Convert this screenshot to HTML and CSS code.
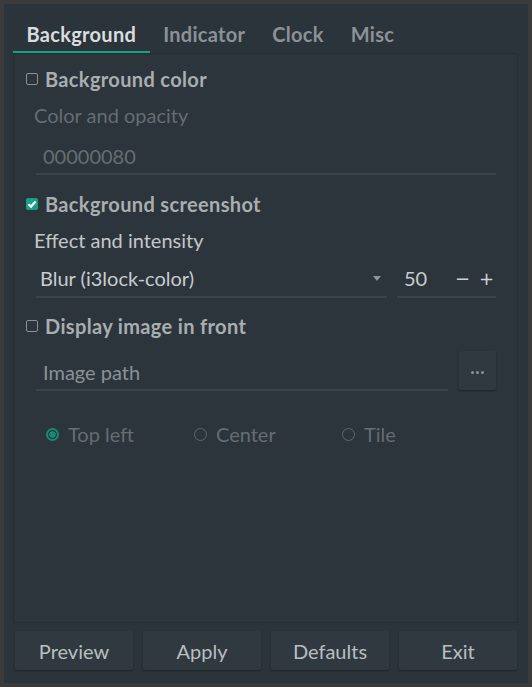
FILE: index.html
```html
<!DOCTYPE html>
<html>
<head>
<meta charset="utf-8">
<link rel="stylesheet" href="styles.css">
</head>
<body>
<div class="window">
  <div class="tabbar">
    <div class="tab active">Background</div>
    <div class="tab">Indicator</div>
    <div class="tab">Clock</div>
    <div class="tab">Misc</div>
  </div>
  <div class="panel">
    <div class="cbrow r1"><span class="cb"></span><span class="cblabel">Background color</span></div>
    <div class="label disabled r2">Color and opacity</div>
    <div class="field r3"><span class="fieldtext disabled">00000080</span></div>
    <div class="cbrow r4"><span class="cb checked"><svg width="12" height="12" viewBox="0 0 12 12"><path d="M2.4 6.2 L5 8.6 L9.6 3.6" fill="none" stroke="#ffffff" stroke-width="2.2"/></svg></span><span class="cblabel">Background screenshot</span></div>
    <div class="label r5">Effect and intensity</div>
    <div class="comborow r6">
      <div class="combo"><span class="fieldtext">Blur (i3lock-color)</span><svg class="arrow" width="8" height="5" viewBox="0 0 8 5"><path d="M0 0 H8 L4 5 Z" fill="#8d9498"/></svg></div>
      <div class="spin"><span class="fieldtext">50</span><span class="pm">−</span><span class="pm plus">+</span></div>
    </div>
    <div class="cbrow r7"><span class="cb"></span><span class="cblabel">Display image in front</span></div>
    <div class="pathrow r8">
      <div class="pathfield"><span class="fieldtext placeholder">Image path</span></div>
      <div class="dots"><span></span><span></span><span></span></div>
    </div>
    <div class="radios r9">
      <div class="radio"><span class="rb sel"></span><span class="disabled">Top left</span></div>
      <div class="radio"><span class="rb"></span><span class="disabled">Center</span></div>
      <div class="radio"><span class="rb"></span><span class="disabled">Tile</span></div>
    </div>
  </div>
  <div class="buttons">
    <div class="btn">Preview</div>
    <div class="btn">Apply</div>
    <div class="btn">Defaults</div>
    <div class="btn">Exit</div>
  </div>
</div>
</body>
</html>
```
FILE: styles.css
```css
html, body {
  margin: 0;
  padding: 0;
  background: #3b3b3b;
}
body {
  font-family: Lato, "Noto Sans", sans-serif;
  font-size: 20px;
  color: #c3c7ca;
}
.window {
  margin: 4px;
  width: 524px;
  height: 679px;
  background: #2b343a;
  display: flex;
  flex-direction: column;
  box-sizing: border-box;
}
.tabbar {
  height: 49px;
  display: flex;
  align-items: flex-end;
  padding-left: 9px;
}
.tab {
  height: 35px;
  padding: 0 13.5px;
  display: flex;
  align-items: center;
  font-weight: bold;
  letter-spacing: 0.3px;
  color: #8b9297;
  border-bottom: 2px solid transparent;
  box-sizing: content-box;
  line-height: 1;
}
.tab.active {
  color: #d9dddf;
  border-bottom-color: #16a085;
}
.panel {
  margin: 0 10px 0 9px;
  height: 570px;
  border: 1px solid #252e33;
  background: #2c353b;
  display: flex;
  flex-direction: column;
  box-sizing: border-box;
}
.cbrow {
  height: 24px;
  display: flex;
  align-items: center;
  padding-left: 12px;
}
.cb {
  width: 12px;
  height: 12px;
  box-sizing: border-box;
  border: 1.5px solid #8b9297;
  border-radius: 2px;
  margin-right: 7px;
  display: flex;
}
.cb.checked {
  border: none;
  background: #16a085;
}
.cblabel {
  font-weight: bold;
  letter-spacing: 0.35px;
  color: #a9aeb1;
}
.label {
  height: 24px;
  box-sizing: border-box;
  padding-bottom: 2px;
  display: flex;
  align-items: center;
  padding-left: 20px;
}
.disabled { color: #656d72; }
.field, .combo, .spin, .pathfield {
  border-bottom: 2px solid #3a454b;
  display: flex;
  align-items: center;
  padding-bottom: 2px;
}
.field {
  margin-left: 22px;
  width: 460px;
  height: 35px;
  box-sizing: border-box;
}
.r1 { margin-top: 13px; }
.r2 { margin-top: 13px; }
.r3 { margin-top: 12px; }
.r4 { margin-top: 17px; }
.r5 { margin-top: 13px; }
.r6 { margin-top: 9px; }
.r7 { margin-top: 16px; }
.r8 { margin-top: 13px; }
.r9 { margin-top: 32px; }
.comborow {
  display: flex;
  margin-left: 22px;
  height: 36px;
}
.combo {
  width: 351px;
  box-sizing: border-box;
  justify-content: space-between;
  padding-right: 6px;
  color: #c8ccce;
}
.fieldtext { padding-left: 4px; }
.field .fieldtext, .pathfield .fieldtext { padding-left: 7px; }
.spin {
  margin-left: 10px;
  width: 99px;
  box-sizing: border-box;
  color: #c8ccce;
}
.spin .fieldtext { padding-left: 7px; flex: 1; }
.pm {
  font-family: "DejaVu Sans", sans-serif;
  font-size: 18px;
  width: 10px;
  text-align: center;
  margin-right: 14px;
  color: #cdd1d3;
}
.pm.plus { margin-right: 7px; }
.pathrow {
  display: flex;
  align-items: flex-end;
  margin-left: 22px;
  height: 40px;
}
.pathfield {
  width: 412px;
  height: 34px;
  box-sizing: border-box;
}
.placeholder { color: #8b9297; }
.dots {
  margin-left: 11px;
  margin-bottom: 1px;
  width: 37px;
  height: 39px;
  background: #2f393f;
  border-radius: 2px;
  box-shadow: 0 1px 2px rgba(0,0,0,0.35);
  display: flex;
  align-items: center;
  justify-content: center;
  gap: 2px;
}
.dots span {
  width: 3px;
  height: 3px;
  border-radius: 50%;
  background: #8a9196;
  margin-top: 3px;
}
.radios {
  display: flex;
  height: 24px;
  box-sizing: border-box;
  padding: 0 0 2px 32px;
}
.radio {
  width: 148px;
  display: flex;
  align-items: center;
}
.rb {
  width: 13px;
  height: 13px;
  box-sizing: border-box;
  border: 1.5px solid #5f676c;
  border-radius: 50%;
  margin-right: 9px;
}
.rb.sel {
  border: 2px solid #168a74;
  background: radial-gradient(circle, #168a74 0 3px, transparent 3.5px);
}
.buttons {
  display: flex;
  gap: 10px;
  padding: 8px 11px 0 11px;
}
.btn {
  width: 118px;
  height: 39px;
  background: #2f393f;
  border-radius: 2px;
  box-shadow: 0 1px 2px rgba(0,0,0,0.35);
  display: flex;
  align-items: center;
  justify-content: center;
  color: #b9bec1;
}
```
